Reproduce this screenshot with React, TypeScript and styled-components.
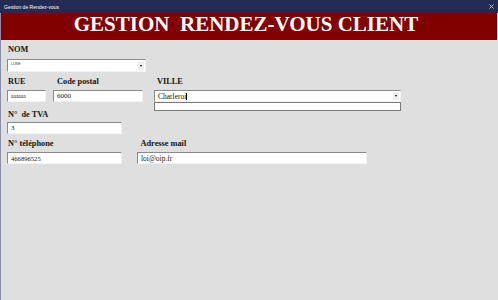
import styled, { createGlobalStyle } from "styled-components";

const GlobalStyle = createGlobalStyle`
  html, body {
    margin: 0;
    padding: 0;
    background: #dfdfdf;
  }
  body {
    font-family: "Liberation Serif", "Times New Roman", serif;
  }
`;

export default function App() {
  return (
    <>
      <GlobalStyle />
      <Window>
        <TitleBar>
          <span>Gestion de Rendez-vous</span>
          <CloseIcon width="5" height="5" viewBox="0 0 5 5">
            <path d="M0.5 0.5 L4.5 4.5 M4.5 0.5 L0.5 4.5" stroke="#b9bdd2" strokeWidth="1" />
          </CloseIcon>
        </TitleBar>

        <Client>
          <Banner>GESTION  RENDEZ-VOUS CLIENT</Banner>

          <Form>
            <Row $top={0} $gap={4}>
              <Field $w={139}>
                <Label $indent={1}>NOM</Label>
                <Combo $h={13} $size={3.6} $top>
                  <ComboText $sans>LUNE</ComboText>
                  <Arrow />
                </Combo>
              </Field>
            </Row>

            <Row $top={5} $gap={3}>
              <Field $w={39}>
                <Label $indent={1}>RUE</Label>
                <TextBox $size={5.5}>aaaaaa</TextBox>
              </Field>
              <Field $w={90} $ml={7}>
                <Label $indent={4}>Code postal</Label>
                <TextBox $size={7}>6000</TextBox>
              </Field>
              <Field $w={247} $ml={11}>
                <Label $indent={3}>VILLE</Label>
                <Combo $size={7.5}>
                  <ComboText>
                    Charleroi
                    <Caret />
                  </ComboText>
                  <Arrow />
                </Combo>
                <DropList />
              </Field>
            </Row>

            <Row $top={8} $gap={2}>
              <Field $w={115}>
                <Label $indent={1}>N°  de TVA</Label>
                <TextBox $size={7}>3</TextBox>
              </Field>
            </Row>

            <Row $top={5} $gap={3}>
              <Field $w={115}>
                <Label $indent={1}>N° téléphone</Label>
                <TextBox $size={6.6}>466896525</TextBox>
              </Field>
              <Field $w={230} $ml={15}>
                <Label $indent={3.5}>Adresse mail</Label>
                <TextBox $size={7.5}>loi@oip.fr</TextBox>
              </Field>
            </Row>
          </Form>
        </Client>
      </Window>
    </>
  );
}

const Window = styled.div`
  width: 498px;
  height: 300px;
  display: flex;
  flex-direction: column;
  overflow: hidden;
`;

const TitleBar = styled.div`
  height: 13px;
  flex-shrink: 0;
  background: #232b55;
  color: #ffffff;
  display: flex;
  align-items: center;
  justify-content: space-between;
  padding: 0 4px 0 4px;
  font: 5px "Liberation Sans", Arial, sans-serif;
`;

const CloseIcon = styled.svg`
  display: block;
`;

const Client = styled.div`
  flex: 1;
  background: #dfdfdf;
  border-left: 1px solid #8a8ea6;
  display: flex;
  flex-direction: column;
`;

const Banner = styled.h1`
  margin: 0 1px 0 0;
  height: 27px;
  background: #800000;
  color: #ffffff;
  font: bold 21px/23px "Liberation Serif", "Times New Roman", serif;
  text-align: center;
  white-space: pre;
  padding-right: 6px;
`;

const Form = styled.div`
  display: flex;
  flex-direction: column;
  padding: 5px 0 0 6px;
`;

const Row = styled.div<{ $top: number; $gap: number }>`
  display: flex;
  align-items: flex-start;
  margin-top: ${(p) => p.$top}px;
  --label-gap: ${(p) => p.$gap}px;
`;

const Field = styled.div<{ $w: number; $ml?: number }>`
  position: relative;
  display: flex;
  flex-direction: column;
  width: ${(p) => p.$w}px;
  margin-left: ${(p) => p.$ml ?? 0}px;
`;

const Label = styled.div<{ $indent: number }>`
  font: bold 8.3px/10px "Liberation Serif", "Times New Roman", serif;
  color: #141414;
  white-space: pre;
  padding-left: ${(p) => p.$indent}px;
  margin-bottom: var(--label-gap);
`;

const TextBox = styled.div<{ $size: number; $sans?: boolean }>`
  box-sizing: border-box;
  height: 12px;
  background: #ffffff;
  border-top: 1px solid #8a8a8a;
  border-left: 1px solid #8a8a8a;
  border-right: 1px solid #f2f2f2;
  border-bottom: 1px solid #f2f2f2;
  padding-left: 3px;
  display: flex;
  align-items: center;
  color: #1a1a1a;
  font-size: ${(p) => p.$size}px;
  font-family: ${(p) =>
    p.$sans
      ? `"Liberation Sans", Arial, sans-serif`
      : `"Liberation Serif", "Times New Roman", serif`};
`;

const Combo = styled.div<{ $h?: number; $size: number; $top?: boolean }>`
  box-sizing: border-box;
  height: ${(p) => p.$h ?? 12}px;
  background: #ffffff;
  border-top: 1px solid #8a8a8a;
  border-left: 1px solid #8a8a8a;
  border-right: 1px solid #f2f2f2;
  border-bottom: 1px solid #f2f2f2;
  display: flex;
  align-items: ${(p) => (p.$top ? "flex-start" : "center")};
  padding-left: 3px;
  font-size: ${(p) => p.$size}px;
  color: #1a1a1a;
`;

const ComboText = styled.span<{ $sans?: boolean }>`
  flex: 1;
  display: flex;
  align-items: center;
  margin-top: ${(p) => (p.$sans ? "2px" : "0")};
  color: ${(p) => (p.$sans ? "#2a3560" : "#1a1a1a")};
  font-family: ${(p) =>
    p.$sans
      ? `"Liberation Sans", Arial, sans-serif`
      : `"Liberation Serif", "Times New Roman", serif`};
`;

const Caret = styled.span`
  display: inline-block;
  width: 0;
  height: 7px;
  border-left: 1px solid #000000;
`;

const Arrow = styled.span`
  align-self: stretch;
  width: 6px;
  margin: 1px 1px 1px 0;
  background: #eeeeee;
  display: flex;
  align-items: center;
  justify-content: center;
  &::after {
    content: "";
    width: 0;
    height: 0;
    border-left: 1.5px solid transparent;
    border-right: 1.5px solid transparent;
    border-top: 2px solid #000000;
  }
`;

const DropList = styled.div`
  position: absolute;
  left: 0;
  right: 0;
  top: 100%;
  height: 9px;
  box-sizing: border-box;
  background: #ffffff;
  border: 1px solid #7a7a7a;
`;
